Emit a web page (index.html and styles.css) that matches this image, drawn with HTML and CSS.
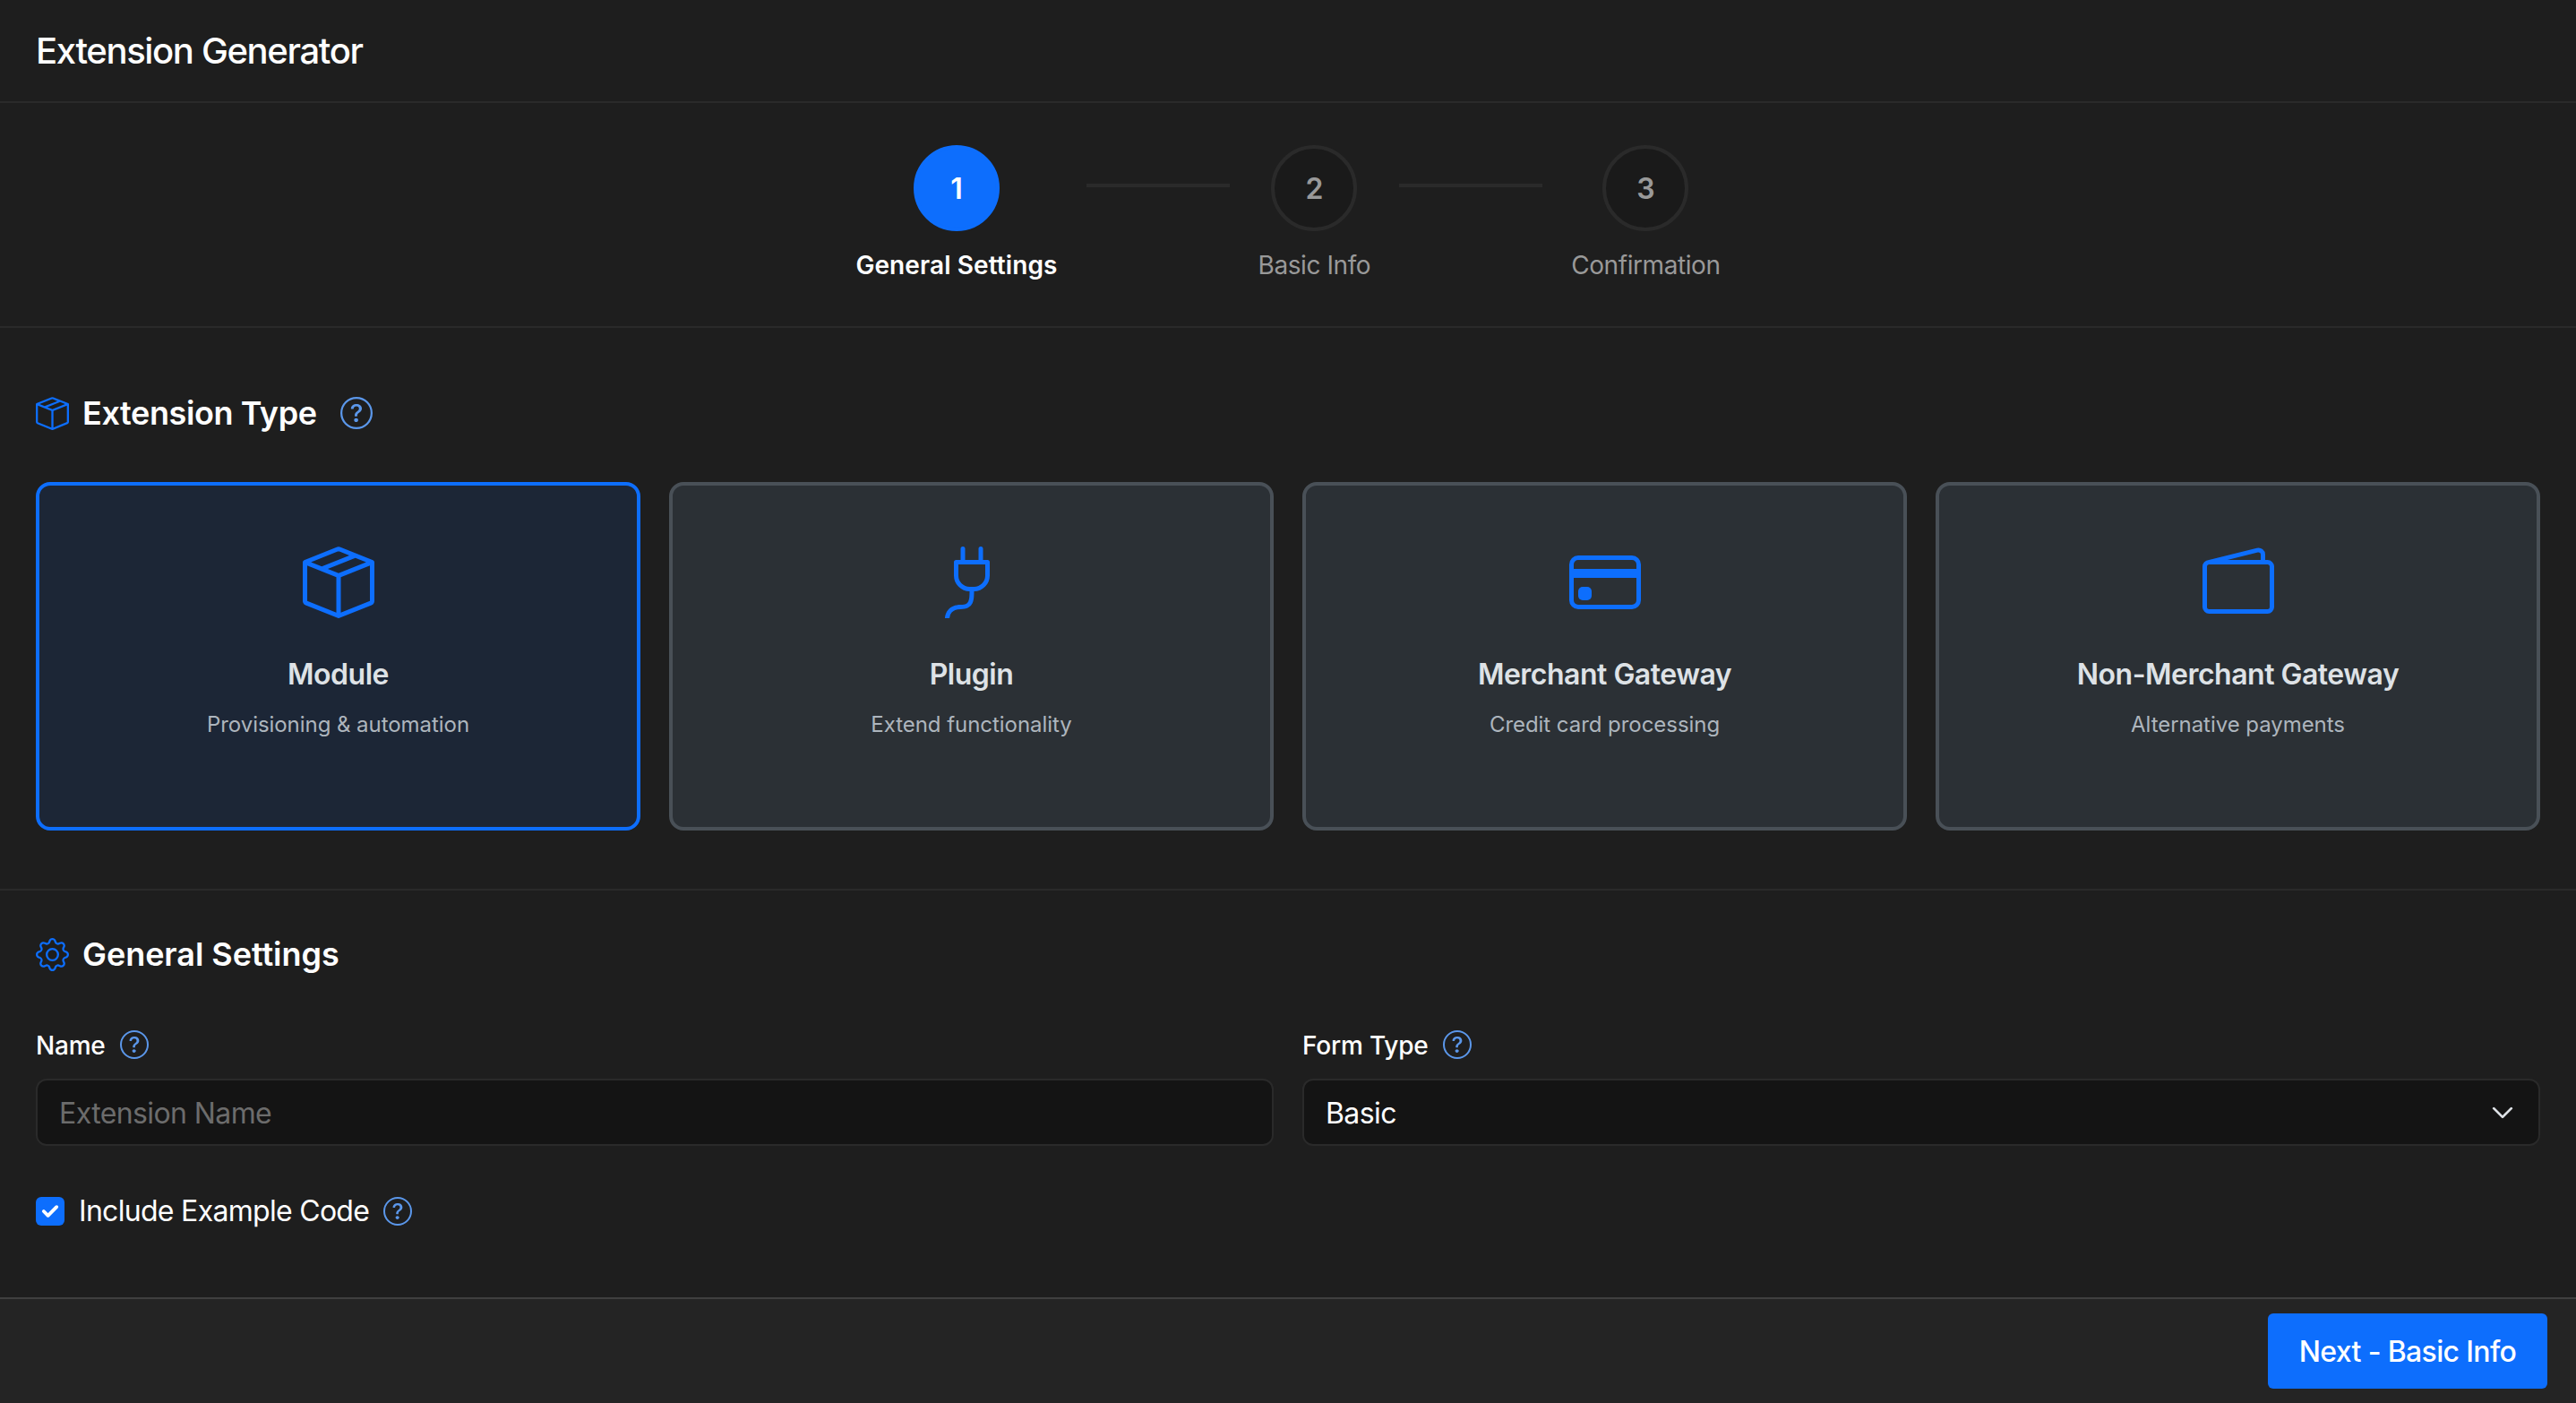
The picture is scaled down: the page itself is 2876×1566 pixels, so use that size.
FILE: index.html
```html
<!DOCTYPE html>
<html lang="en">
<head>
<meta charset="utf-8">
<title>Extension Generator</title>
<link rel="stylesheet" href="styles.css">
</head>
<body>
<svg class="defs" width="0" height="0" aria-hidden="true">
  <symbol id="i-box" viewBox="0 0 16 16"><path d="M8.186 1.113a.5.5 0 0 0-.372 0L1.846 3.5l2.404.961L10.404 2zm3.564 1.426L5.596 5 8 5.961 14.154 3.5zm3.25 1.7-6.5 2.6v7.922l6.5-2.6V4.24zM7.5 14.762V6.838L1 4.239v7.925zM7.443.184a1.5 1.5 0 0 1 1.114 0l7.129 2.852A.5.5 0 0 1 16 3.5v8.662a1 1 0 0 1-.629.928l-7.185 2.874a.5.5 0 0 1-.372 0L.63 13.09a1 1 0 0 1-.63-.928V3.5a.5.5 0 0 1 .314-.464z"/></symbol>
  <symbol id="i-plug" viewBox="0 0 16 16"><path d="M6 0a.5.5 0 0 1 .5.5V3h3V.5a.5.5 0 0 1 1 0V3h1a.5.5 0 0 1 .5.5v3A3.5 3.5 0 0 1 8.5 10c-.002.434-.01.845-.04 1.22-.041.514-.126 1.003-.317 1.424a2.08 2.08 0 0 1-.97 1.028C6.725 13.9 6.169 14 5.5 14c-.998 0-1.61.33-1.974.718A1.92 1.92 0 0 0 3 16H2c0-.616.232-1.367.797-1.968C3.374 13.42 4.261 13 5.5 13c.581 0 .962-.088 1.218-.219.241-.123.4-.3.514-.55.121-.266.193-.621.23-1.09.027-.34.035-.718.037-1.141A3.5 3.5 0 0 1 4 6.5v-3a.5.5 0 0 1 .5-.5h1V.5A.5.5 0 0 1 6 0M5 4v2.5A2.5 2.5 0 0 0 7.5 9h1A2.5 2.5 0 0 0 11 6.5V4z"/></symbol>
  <symbol id="i-card" viewBox="0 0 16 16"><path d="M0 4a2 2 0 0 1 2-2h12a2 2 0 0 1 2 2v8a2 2 0 0 1-2 2H2a2 2 0 0 1-2-2zm2-1a1 1 0 0 0-1 1v1h14V4a1 1 0 0 0-1-1zm13 4H1v5a1 1 0 0 0 1 1h12a1 1 0 0 0 1-1z"/><path d="M2 10a1 1 0 0 1 1-1h1a1 1 0 0 1 1 1v1a1 1 0 0 1-1 1H3a1 1 0 0 1-1-1z"/></symbol>
  <symbol id="i-wallet" viewBox="0 0 16 16"><path d="M12.136.326A1.5 1.5 0 0 1 14 1.78V3h.5A1.5 1.5 0 0 1 16 4.5v9a1.5 1.5 0 0 1-1.5 1.5h-13A1.5 1.5 0 0 1 0 13.5v-9a1.5 1.5 0 0 1 1.432-1.499zM5.562 3H13V1.78a.5.5 0 0 0-.621-.484zM1.5 4a.5.5 0 0 0-.5.5v9a.5.5 0 0 0 .5.5h13a.5.5 0 0 0 .5-.5v-9a.5.5 0 0 0-.5-.5z"/></symbol>
  <symbol id="i-gear" viewBox="0 0 16 16"><path d="M8 4.754a3.246 3.246 0 1 0 0 6.492 3.246 3.246 0 0 0 0-6.492M5.754 8a2.246 2.246 0 1 1 4.492 0 2.246 2.246 0 0 1-4.492 0"/><path d="M9.796 1.343c-.527-1.79-3.065-1.79-3.592 0l-.094.319a.873.873 0 0 1-1.255.52l-.292-.16c-1.64-.892-3.433.902-2.54 2.541l.159.292a.873.873 0 0 1-.52 1.255l-.319.094c-1.79.527-1.79 3.065 0 3.592l.319.094a.873.873 0 0 1 .52 1.255l-.16.292c-.892 1.64.901 3.434 2.541 2.54l.292-.159a.873.873 0 0 1 1.255.52l.094.319c.527 1.79 3.065 1.79 3.592 0l.094-.319a.873.873 0 0 1 1.255-.52l.292.16c1.64.893 3.434-.902 2.54-2.541l-.159-.292a.873.873 0 0 1 .52-1.255l.319-.094c1.79-.527 1.79-3.065 0-3.592l-.319-.094a.873.873 0 0 1-.52-1.255l.16-.292c.893-1.64-.902-3.433-2.541-2.54l-.292.159a.873.873 0 0 1-1.255-.52zm-2.633.283c.246-.835 1.428-.835 1.674 0l.094.319a1.873 1.873 0 0 0 2.693 1.115l.291-.16c.764-.415 1.6.42 1.184 1.185l-.159.292a1.873 1.873 0 0 0 1.116 2.692l.318.094c.835.246.835 1.428 0 1.674l-.319.094a1.873 1.873 0 0 0-1.115 2.693l.16.291c.415.764-.42 1.6-1.185 1.184l-.291-.159a1.873 1.873 0 0 0-2.693 1.116l-.094.318c-.246.835-1.428.835-1.674 0l-.094-.319a1.873 1.873 0 0 0-2.692-1.115l-.292.16c-.764.415-1.6-.42-1.184-1.185l.159-.291A1.873 1.873 0 0 0 1.945 8.93l-.319-.094c-.835-.246-.835-1.428 0-1.674l.319-.094A1.873 1.873 0 0 0 3.06 4.377l-.16-.292c-.415-.764.42-1.6 1.185-1.184l.292.159a1.873 1.873 0 0 0 2.692-1.115z"/></symbol>
  <symbol id="i-help" viewBox="0 0 16 16"><path d="M8 15A7 7 0 1 1 8 1a7 7 0 0 1 0 14m0 1A8 8 0 1 0 8 0a8 8 0 0 0 0 16"/><path d="M5.255 5.786a.237.237 0 0 0 .241.247h.825c.138 0 .248-.113.266-.25.09-.656.54-1.134 1.342-1.134.686 0 1.314.343 1.314 1.168 0 .635-.374.927-.965 1.371-.673.489-1.206 1.06-1.168 1.987l.003.217a.25.25 0 0 0 .25.246h.811a.25.25 0 0 0 .25-.25v-.105c0-.718.273-.927 1.01-1.486.609-.463 1.244-.977 1.244-2.056 0-1.511-1.276-2.241-2.673-2.241-1.267 0-2.655.59-2.75 2.286m1.557 5.763c0 .533.425.927 1.01.927.609 0 1.028-.394 1.028-.927 0-.552-.42-.94-1.029-.94-.584 0-1.009.388-1.009.94"/></symbol>
</svg>
<div class="app">
  <header class="topbar"><h1 class="app-title">Extension Generator</h1></header>

  <nav class="stepper">
    <div class="step step-active"><div class="step-circle">1</div><div class="step-label">General Settings</div></div>
    <div class="step-line"></div>
    <div class="step"><div class="step-circle">2</div><div class="step-label">Basic Info</div></div>
    <div class="step-line"></div>
    <div class="step"><div class="step-circle">3</div><div class="step-label">Confirmation</div></div>
  </nav>

  <section class="section section-type">
    <div class="section-head">
      <svg class="section-icon"><use href="#i-box"/></svg>
      <h2 class="section-title">Extension Type</h2>
      <svg class="help help-lg"><use href="#i-help"/></svg>
    </div>
    <div class="cards">
      <div class="card card-selected">
        <svg class="card-icon"><use href="#i-box"/></svg>
        <div class="card-title">Module</div>
        <div class="card-sub">Provisioning &amp; automation</div>
      </div>
      <div class="card">
        <svg class="card-icon"><use href="#i-plug"/></svg>
        <div class="card-title">Plugin</div>
        <div class="card-sub">Extend functionality</div>
      </div>
      <div class="card">
        <svg class="card-icon"><use href="#i-card"/></svg>
        <div class="card-title">Merchant Gateway</div>
        <div class="card-sub">Credit card processing</div>
      </div>
      <div class="card">
        <svg class="card-icon"><use href="#i-wallet"/></svg>
        <div class="card-title">Non-Merchant Gateway</div>
        <div class="card-sub">Alternative payments</div>
      </div>
    </div>
  </section>

  <section class="section section-general">
    <div class="section-head">
      <svg class="section-icon"><use href="#i-gear"/></svg>
      <h2 class="section-title section-title-wide">General Settings</h2>
    </div>
    <div class="fields">
      <div class="field">
        <div class="field-label"><span class="field-text">Name</span><svg class="help"><use href="#i-help"/></svg></div>
        <div class="control control-placeholder">Extension Name</div>
      </div>
      <div class="field">
        <div class="field-label"><span class="field-text">Form Type</span><svg class="help"><use href="#i-help"/></svg></div>
        <div class="control control-select">
          <span>Basic</span>
          <svg class="chevron" viewBox="0 0 16 16"><path d="M2 5l6 6 6-6"/></svg>
        </div>
      </div>
    </div>
    <div class="check-row">
      <span class="checkbox"><svg viewBox="0 0 20 20"><path d="M5.5 10l3 3 6-6"/></svg></span>
      <span class="check-label">Include Example Code</span>
      <svg class="help"><use href="#i-help"/></svg>
    </div>
  </section>

  <footer class="footer"><button class="btn-next" type="button">Next - Basic Info</button></footer>
</div>
</body>
</html>
```

FILE: styles.css
```css
* { box-sizing: border-box; }
html, body { margin: 0; height: 100%; }
body { background: #1e1e1e; color: #fff; font-family: Inter, "Liberation Sans", sans-serif; overflow: hidden; }
.defs { position: absolute; }
svg { fill: currentColor; display: block; flex: none; }

.app { height: 1566px; display: flex; flex-direction: column; background: #1e1e1e; }

.topbar { height: 115px; padding: 1px 40px 0; display: flex; align-items: center; border-bottom: 2px solid #2a2a2a; }
.app-title { margin: 0; font-size: 40px; font-weight: 500; line-height: 1; letter-spacing: -1.35px; }

.stepper { height: 251px; padding-top: 47px; display: flex; justify-content: center; align-items: flex-start; border-bottom: 2px solid #2a2a2a; }
.step { display: flex; flex-direction: column; align-items: center; }
.step-circle { width: 96px; height: 96px; border-radius: 50%; border: 4px solid #2a2a2a; background: #1a1a1a; color: #999; display: flex; align-items: center; justify-content: center; font-size: 32px; font-weight: 600; }
.step-active .step-circle { background: #0d6efd; border-color: #0d6efd; color: #fff; }
.step-label { margin-top: 20px; font-size: 28px; line-height: 36px; color: #999; letter-spacing: -0.42px; }
.step-active .step-label { color: #fff; font-weight: 600; letter-spacing: 0.1px; }
.step-line { width: 160px; height: 4px; margin: 43px 32px 0; background: #2a2a2a; }

.section { padding: 0 40px; }
.section-type { height: 628px; padding-top: 75px; border-bottom: 2px solid #2a2a2a; }
.section-general { flex: 1; padding-top: 51px; }
.section-head { display: flex; align-items: center; height: 40px; }
.section-icon { width: 37px; height: 37px; color: #0d6efd; margin-right: 15px; }
.section-title { margin: 0; font-size: 36px; font-weight: 600; line-height: 40px; letter-spacing: -0.4px; }
.section-title-wide { letter-spacing: -0.05px; }
.help { width: 32px; height: 32px; color: #5b97ea; margin-left: 16px; }
.help-lg { width: 36px; height: 36px; margin-left: 26px; }

.cards { display: grid; grid-template-columns: repeat(4, 1fr); gap: 32px; margin-top: 57px; }
.card { height: 389px; border: 4px solid #495057; border-radius: 16px; background: #2b3035; display: flex; flex-direction: column; align-items: center; padding-top: 68px; }
.card-selected { border-color: #0d6efd; background: #1c2636; }
.card-icon { width: 80px; height: 80px; color: #0d6efd; }
.card-title { margin-top: 43px; font-size: 32px; line-height: 40px; font-weight: 600; color: #dee2e6; letter-spacing: -0.5px; }
.card-sub { margin-top: 20px; font-size: 24px; line-height: 32px; color: #adb5bd; letter-spacing: -0.05px; }

.fields { display: grid; grid-template-columns: 1fr 1fr; gap: 32px; margin-top: 65px; }
.field-label { display: flex; align-items: center; height: 32px; font-size: 28px; font-weight: 500; margin-bottom: 22px; letter-spacing: -0.2px; }
.field-text { padding-top: 2px; }
.control { height: 75px; border: 2px solid #2a2a2a; border-radius: 12px; background: #141414; padding: 2px 24px 0; display: flex; align-items: center; justify-content: space-between; font-size: 32px; letter-spacing: -0.6px; }
.control-placeholder { color: #6c6c6c; }
.chevron { width: 26px; height: 26px; margin: -2px 3px 0 0; fill: none; stroke: #dee2e6; stroke-width: 1.7; stroke-linecap: round; stroke-linejoin: round; }
.check-row { display: flex; align-items: center; margin-top: 57px; }
.checkbox { width: 32px; height: 32px; border-radius: 6px; background: #0d6efd; display: block; }
.checkbox svg { width: 32px; height: 32px; fill: none; stroke: #fff; stroke-width: 2.4; stroke-linecap: round; stroke-linejoin: round; }
.check-label { margin-left: 16px; font-size: 32px; line-height: 32px; letter-spacing: -0.7px; }

.footer { height: 118px; border-top: 2px solid #404040; background: #242424; display: flex; align-items: center; justify-content: flex-end; padding-right: 32px; }
.btn-next { width: 312px; height: 84px; border: 0; border-radius: 6px; background: #0d6efd; color: #fff; font-family: Inter, "Liberation Sans", sans-serif; font-size: 32px; font-weight: 500; letter-spacing: -0.65px; }
```
